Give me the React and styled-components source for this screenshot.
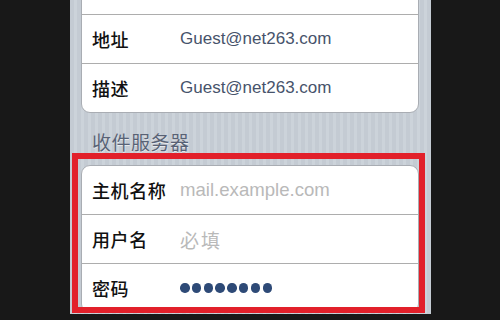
import React from 'react';
import styled, { createGlobalStyle } from 'styled-components';

const GlobalStyle = createGlobalStyle`
  html, body {
    margin: 0;
    padding: 0;
    background: #181818;
  }
  body {
    width: 500px;
    height: 320px;
    overflow: hidden;
    font-family: "Liberation Sans", "Noto Sans CJK SC", sans-serif;
  }
`

const Screen = styled.div`
  position: relative;
  margin-left: 70px;
  width: 361px;
  height: 314px;
  overflow: hidden;
  background: repeating-linear-gradient(
    90deg,
    #c4cbd3 0px,
    #c4cbd3 4px,
    #ccd3da 4px,
    #ccd3da 7px
  );
`

const Group = styled.div`
  margin: ${p => (p.$first ? '-35px' : '0')} 12px 0 11px;
  background: #fff;
  border: 1px solid #a9adb3;
  border-radius: 9px;
`

const Row = styled.div`
  display: flex;
  align-items: center;
  height: 48px;
  padding-left: 10px;
  & + & {
    border-top: 1px solid #adadad;
  }
`

const Label = styled.div`
  width: 88px;
  flex-shrink: 0;
  font-size: 18px;
  font-weight: 500;
  letter-spacing: 0.6px;
  color: #111;
  font-family: "Noto Sans CJK SC", sans-serif;
`

const Value = styled.div`
  font-size: 17px;
  color: #47536b;
`

const Placeholder = styled.div`
  font-size: ${p => (p.$cjk ? '19px' : '18.6px')};
  letter-spacing: ${p => (p.$cjk ? '2px' : '0')};
  color: #b9b9b9;
  font-family: ${p => (p.$cjk ? '"Noto Sans CJK SC", sans-serif' : '"Liberation Sans", sans-serif')};
`

const Dots = styled.div`
  display: flex;
  gap: 2.3px;
`

const Dot = styled.span`
  width: 9.5px;
  height: 9.5px;
  border-radius: 50%;
  background: #2e4a77;
`

const SectionTitle = styled.div`
  padding: 18px 0 12px 22px;
  line-height: 22px;
  font-size: 19px;
  letter-spacing: 0.5px;
  color: #586275;
  text-shadow: 0 1px 0 rgba(255, 255, 255, 0.6);
  font-family: "Noto Sans CJK SC", sans-serif;
`

const Highlight = styled.div`
  position: absolute;
  left: 2px;
  top: 153px;
  width: 353px;
  height: 160px;
  box-sizing: border-box;
  border: 6px solid #e2202a;
  pointer-events: none;
`

export default function App() {
  return (
    <>
      <GlobalStyle />
      <Screen>
        <Group $first>
          <Row />
          <Row>
            <Label>地址</Label>
            <Value>Guest@net263.com</Value>
          </Row>
          <Row>
            <Label>描述</Label>
            <Value>Guest@net263.com</Value>
          </Row>
        </Group>
        <SectionTitle>收件服务器</SectionTitle>
        <Group>
          <Row>
            <Label>主机名称</Label>
            <Placeholder>mail.example.com</Placeholder>
          </Row>
          <Row>
            <Label>用户名</Label>
            <Placeholder $cjk>必填</Placeholder>
          </Row>
          <Row>
            <Label>密码</Label>
            <Dots>
              {Array.from({ length: 8 }).map((_, i) => (
                <Dot key={i} />
              ))}
            </Dots>
          </Row>
        </Group>
        <Highlight />
      </Screen>
    </>
  );
}
